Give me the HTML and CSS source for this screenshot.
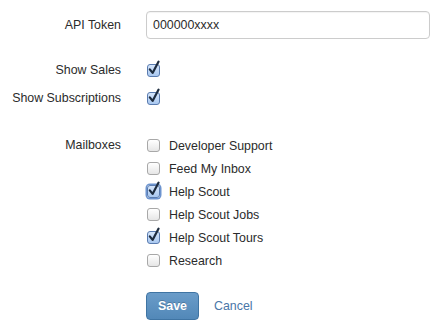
FILE: index.html
```html
<!DOCTYPE html>
<html lang="en">
<head>
    <meta charset="UTF-8">
    <title>Help Scout Settings</title>
    <link rel="stylesheet" href="styles.css">
</head>
<body>

    <form class="settings-form">
        <div class="form-row">
            <label class="row-label" for="apiToken">API Token</label>
            <input class="text-input" type="text" id="apiToken" value="000000xxxx">
        </div>

        <div class="form-row check-row first-check">
            <span class="row-label">Show Sales</span>
            <span class="box checked">
                <svg viewBox="0 0 14 16" width="14" height="16"><path d="M2.8 9.4 L5.6 12.9 L11.6 1.6" fill="none" stroke="#1d2c3f" stroke-width="2.2" stroke-linecap="round" stroke-linejoin="round"/></svg>
            </span>
        </div>

        <div class="form-row check-row">
            <span class="row-label">Show Subscriptions</span>
            <span class="box checked">
                <svg viewBox="0 0 14 16" width="14" height="16"><path d="M2.8 9.4 L5.6 12.9 L11.6 1.6" fill="none" stroke="#1d2c3f" stroke-width="2.2" stroke-linecap="round" stroke-linejoin="round"/></svg>
            </span>
        </div>

        <div class="form-row mailbox-row">
            <span class="row-label">Mailboxes</span>
            <div class="mailbox-list">
                <label class="mailbox"><span class="box"></span>Developer Support</label>
                <label class="mailbox"><span class="box"></span>Feed My Inbox</label>
                <label class="mailbox"><span class="box checked focused">
                    <svg viewBox="0 0 14 16" width="14" height="16"><path d="M2.8 9.4 L5.6 12.9 L11.6 1.6" fill="none" stroke="#1d2c3f" stroke-width="2.2" stroke-linecap="round" stroke-linejoin="round"/></svg>
                </span>Help Scout</label>
                <label class="mailbox"><span class="box"></span>Help Scout Jobs</label>
                <label class="mailbox"><span class="box checked">
                    <svg viewBox="0 0 14 16" width="14" height="16"><path d="M2.8 9.4 L5.6 12.9 L11.6 1.6" fill="none" stroke="#1d2c3f" stroke-width="2.2" stroke-linecap="round" stroke-linejoin="round"/></svg>
                </span>Help Scout Tours</label>
                <label class="mailbox"><span class="box"></span>Research</label>
            </div>
        </div>

        <div class="form-row actions">
            <span class="row-label"></span>
            <button class="btn-save" type="button">Save</button>
            <a class="cancel-link" href="#">Cancel</a>
        </div>
    </form>

</body>
</html>
```

FILE: styles.css
```css
/* Reset */
* {
    margin: 0;
    padding: 0;
    box-sizing: border-box;
}

body {
    background: #ffffff;
    color: #2b2b2b;
    font-family: 'Liberation Sans', Arial, sans-serif;
    font-size: 12.4px;
}

/* Form layout */
.settings-form {
    padding-top: 11px;
    width: 430px;
}

.form-row {
    display: flex;
    align-items: center;
}

.row-label {
    width: 121px;
    flex-shrink: 0;
    text-align: right;
    margin-right: 25px;
}

/* API token input */
.text-input {
    flex: 1;
    height: 28px;
    padding: 0 6px;
    border: 1px solid #cccccc;
    border-radius: 4px;
    font-family: inherit;
    font-size: 12.4px;
    color: #2b2b2b;
    box-shadow: inset 0 1px 1px rgba(0, 0, 0, 0.05);
}

/* Checkbox rows */
.check-row {
    height: 28px;
}

.first-check {
    margin-top: 17px;
}

.mailbox-row {
    margin-top: 22px;
    align-items: flex-start;
}

.mailbox-row .row-label {
    line-height: 23px;
}

.mailbox-list {
    display: flex;
    flex-direction: column;
}

.mailbox {
    display: flex;
    align-items: center;
    height: 23px;
}

/* Fake mac checkboxes */
.box {
    position: relative;
    display: inline-block;
    width: 13px;
    height: 13px;
    margin-left: 1px;
    margin-right: 9px;
    border: 1px solid #a8a8a8;
    border-radius: 3px;
    background: linear-gradient(to bottom, #ffffff, #e6e6e6);
    flex-shrink: 0;
}

.box.checked {
    border-color: #5a7cb0;
    background: linear-gradient(to bottom, #d6e6fb, #a9c8f0);
}

.box.focused {
    box-shadow: 0 0 0 1.5px #6d94cf;
}

.box svg {
    position: absolute;
    left: -1px;
    top: -5px;
}

/* Buttons */
.actions {
    margin-top: 20px;
}

.btn-save {
    width: 53px;
    height: 28px;
    border: 1px solid #3f74a3;
    border-radius: 4px;
    background: linear-gradient(to bottom, #6a9cc9, #5288b8);
    color: #ffffff;
    font-family: inherit;
    font-size: 12.4px;
    font-weight: bold;
    text-shadow: 0 -1px 0 rgba(0, 0, 0, 0.2);
}

.cancel-link {
    margin-left: 15px;
    color: #4a76a8;
    text-decoration: none;
}
```
